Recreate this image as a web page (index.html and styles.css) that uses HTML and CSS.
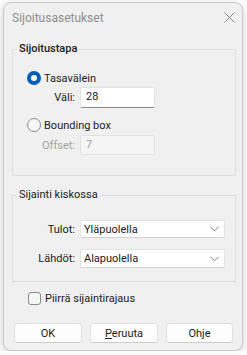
FILE: index.html
```html
<!DOCTYPE html>
<html lang="fi">
<head>
    <meta charset="UTF-8">
    <meta name="viewport" content="width=device-width, initial-scale=1.0">
    <title>Sijoitusasetukset</title>
    <link rel="stylesheet" href="styles.css">
</head>
<body>
    <div class="dialog">
        <div class="titlebar">
            <span class="title">Sijoitusasetukset</span>
            <svg class="close" width="11" height="11" viewBox="0 0 11 11">
                <path d="M0.5 0.5 L10.5 10.5 M10.5 0.5 L0.5 10.5" stroke="#8a8a8a" stroke-width="1" fill="none"/>
            </svg>
        </div>
        <div class="content">
            <fieldset class="group group-first">
                <legend>Sijoitustapa</legend>
                <div class="radio-row">
                    <span class="radio checked"></span>
                    <span>Tasavälein</span>
                </div>
                <div class="field-row row-vali">
                    <label class="field-label" for="vali">Väli:</label>
                    <input type="text" id="vali" class="textbox" value="28">
                </div>
                <div class="radio-row row-bbox">
                    <span class="radio"></span>
                    <span>Bounding box</span>
                </div>
                <div class="field-row row-offset">
                    <label class="field-label disabled" for="offset">Offset:</label>
                    <input type="text" id="offset" class="textbox textbox-disabled" value="7" disabled>
                </div>
            </fieldset>

            <fieldset class="group group-second">
                <legend>Sijainti kiskossa</legend>
                <div class="field-row row-tulot">
                    <span class="field-label">Tulot:</span>
                    <div class="select select-tulot">
                        <span>Yläpuolella</span>
                        <svg width="9" height="6" viewBox="0 0 9 6"><path d="M0.5 0.8 L4.5 4.8 L8.5 0.8" stroke="#7a7a7a" stroke-width="1" fill="none"/></svg>
                    </div>
                </div>
                <div class="field-row row-lahdot">
                    <span class="field-label">Lähdöt:</span>
                    <div class="select">
                        <span>Alapuolella</span>
                        <svg width="9" height="6" viewBox="0 0 9 6"><path d="M0.5 0.8 L4.5 4.8 L8.5 0.8" stroke="#7a7a7a" stroke-width="1" fill="none"/></svg>
                    </div>
                </div>
            </fieldset>

            <div class="check-row">
                <span class="checkbox"></span>
                <span>Piirrä sijaintirajaus</span>
            </div>

            <div class="buttons">
                <button class="btn">OK</button>
                <button class="btn"><u>P</u>eruuta</button>
                <button class="btn btn-last">Ohje</button>
            </div>
        </div>
    </div>
</body>
</html>
```

FILE: styles.css
```css
body { margin: 0; padding: 2px 0 0 3px; background: #fcfcfc; font-family: Roboto, "Liberation Sans", sans-serif; font-size: 11px; color: #1b1b1b; }
.dialog { width: 238px; height: 347px; background: #f0f0f0; border: 1px solid #c9c9c9; border-radius: 8px; box-shadow: 0 2px 6px rgba(0,0,0,0.18); display: flex; flex-direction: column; overflow: hidden; }
.titlebar { height: 30px; display: flex; align-items: center; justify-content: space-between; padding: 0 7px 0 8px; }
.title { font-size: 12px; color: #8e8e8e; }
.close { margin-top: -1px; }
.content { padding: 9px 6px 0 8px; }

.group { margin: 0; padding: 0 0 0 0; border: 1px solid #dcdcdc; }
.group legend { margin-left: 4px; padding: 0 2px; line-height: 14px; color: #1b1b1b; }
.group-first legend { font-weight: 500; }
.group-first { padding-top: 14px; padding-bottom: 20px; }
.group-second { margin-top: 12px; padding-top: 18px; padding-bottom: 13px; }

.radio-row { display: flex; align-items: center; height: 16px; padding-left: 14px; gap: 3px; }
.row-bbox { margin-top: 9px; }
.radio { width: 12px; height: 12px; border: 1px solid #8a8a8a; border-radius: 50%; background: #f6f6f6; box-sizing: content-box; }
.radio.checked { width: 6px; height: 6px; border: 4px solid #005fb8; background: #fff; }

.field-row { display: flex; align-items: center; }
.field-label { width: 62px; text-align: right; margin-right: 5px; }
.field-label.disabled { color: #a2a2a2; }
.row-vali { margin-top: 1px; }
.row-offset { margin-top: 2px; }
.row-lahdot { margin-top: 11px; }

.textbox { width: 75px; height: 21px; box-sizing: border-box; margin: 0; border: 1px solid #e3e3e3; border-bottom-color: #8c8c8c; border-radius: 2px; background: #fff; font: inherit; color: #1b1b1b; padding: 0 5px 2px; }
.textbox-disabled { height: 20px; background: #f5f5f5; border-color: #e1e1e1; color: #a2a2a2; }

.select { width: 145px; height: 19px; box-sizing: border-box; border: 1px solid #e3e3e3; border-bottom-color: #d2d2d2; border-radius: 2px; background: #fff; display: flex; align-items: center; justify-content: space-between; padding: 0 5px 0 3px; }
.select-tulot { height: 18px; }

.check-row { display: flex; align-items: center; gap: 4px; margin-top: 10px; padding-left: 16px; height: 13px; }
.checkbox { width: 11px; height: 11px; border: 1px solid #8a8a8a; border-radius: 3px; background: #f6f6f6; }

.buttons { display: flex; gap: 8px; margin-top: 18px; padding-left: 2px; }
.btn { width: 68px; height: 20px; margin: 0; padding: 0; border: 1px solid #e0e0e0; border-bottom-color: #cccccc; border-radius: 4px; background: #fdfdfd; font: inherit; color: #1b1b1b; }
.btn-last { width: 67px; }
.btn u { text-underline-offset: 1px; }
```
